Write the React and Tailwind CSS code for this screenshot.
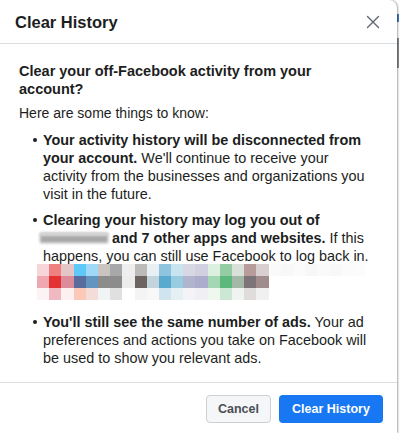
import React from "react";

const row1 = ["bg-[#f7d5d8]","bg-[#ef7f80]","bg-[#e4c5c8]","bg-[#5ec8f8]","bg-[#a0d8f8]","bg-[#cac4c0]","bg-[#a6a8aa]","bg-[#eeeeee]","bg-[#bcbbb9]","bg-[#e8f0f4]","bg-[#8ec4de]","bg-[#c8e4f0]","bg-[#d8d8e4]","bg-[#d0d0e0]","bg-[#dcf0e0]","bg-[#94cca4]","bg-[#d8e0d8]","bg-[#b89c9c]","bg-[#d8d0d0]","bg-[#fafafa]","bg-[#f8f8f8]","bg-[#fbfbfb]","bg-[#f7f7f7]","bg-[#fafafa]","bg-[#f8f8f8]","bg-[#fbfbfb]","bg-[#fcfcfc]"];
const row2 = ["bg-[#f0a8b0]","bg-[#e43234]","bg-[#dc8c98]","bg-[#5a6c9c]","bg-[#6494c0]","bg-[#8c8c8c]","bg-[#8c8c8c]","bg-[#ececec]","bg-[#6c6460]","bg-[#c4d4dc]","bg-[#5aaad0]","bg-[#98cce0]","bg-[#b0b4cc]","bg-[#acaccc]","bg-[#a4d8b4]","bg-[#5cb87c]","bg-[#a4b8a8]","bg-[#7c7478]","bg-[#a08c8c]","bg-[#ffffff]","bg-[#ffffff]","bg-[#ffffff]","bg-[#ffffff]","bg-[#ffffff]","bg-[#ffffff]","bg-[#ffffff]","bg-[#ffffff]"];
const row3 = ["bg-[#fcf4f4]","bg-[#f0b8c0]","bg-[#fcf0f0]","bg-[#fcc8b8]","bg-[#f4dcd8]","bg-[#f0f4f4]","bg-[#e0e0e0]","bg-[#ffffff]","bg-[#f4f4f4]","bg-[#f8f8f8]","bg-[#d0e4f0]","bg-[#e4f0f4]","bg-[#f4f4f8]","bg-[#f0f0f4]","bg-[#eef8ee]","bg-[#cce8d4]","bg-[#f0f4f0]","bg-[#e0dcdc]","bg-[#f0f0f0]","bg-[#ffffff]","bg-[#ffffff]","bg-[#ffffff]","bg-[#ffffff]","bg-[#ffffff]","bg-[#ffffff]","bg-[#ffffff]","bg-[#ffffff]"];

function PixelRow({ cells }) {
  return (
    <div className="flex">
      {cells.map((c, i) => (
        <div key={i} className={`${c} w-[12.2px] h-[12px]`} />
      ))}
    </div>
  );
}

function Bullet({ children }) {
  return (
    <li className="flex">
      <span className="w-[24px] shrink-0 flex justify-end pr-[6px] pt-[7px]">
        <span className="block w-[4px] h-[4px] rounded-full bg-[#1c1e21]" />
      </span>
      <div className="flex-1">{children}</div>
    </li>
  );
}

export default function App() {
  return (
    <div
      className="w-[401px] h-[433px] flex bg-white overflow-hidden text-[#1c1e21]"
      style={{ fontFamily: '"Liberation Sans", Arial, sans-serif' }}
    >
      <div className="w-[397px] h-[433px] flex flex-col bg-white rounded-tr-[8px] shadow-[1px_0_2px_rgba(0,0,0,0.35)] z-10">
        <div className="h-[44px] shrink-0 flex items-center justify-between pl-[15px] pr-[12px] border-b border-[#dadde1]">
          <h1 className="text-[16.5px] font-bold leading-none mt-[1px]">Clear History</h1>
          <button className="w-[24px] h-[24px] flex items-center justify-center text-[#606770]">
            <svg width="14" height="14" viewBox="0 0 14 14" fill="none" stroke="currentColor" strokeWidth="1.4" strokeLinecap="round">
              <path d="M1.5 1.5 L12.5 12.5 M12.5 1.5 L1.5 12.5" />
            </svg>
          </button>
        </div>

        <div className="flex-1 pt-[18px] pl-[19px] pr-[8px] text-[14px] leading-[18px]">
          <h2 className="font-bold text-[14.5px] leading-[18px]">
            <span className="block whitespace-nowrap">Clear your off-Facebook activity from your</span>
            <span className="block whitespace-nowrap">account?</span>
          </h2>
          <p className="mt-[6px] whitespace-nowrap">Here are some things to know:</p>
          <ul className="mt-[9px] flex flex-col gap-[8px] text-[14.4px]">
            <Bullet>
              <span className="block whitespace-nowrap font-bold">Your activity history will be disconnected from</span>
              <span className="block whitespace-nowrap"><b>your account.</b> We'll continue to receive your</span>
              <span className="block whitespace-nowrap">activity from the businesses and organizations you</span>
              <span className="block whitespace-nowrap">visit in the future.</span>
            </Bullet>
            <Bullet>
              <span className="block whitespace-nowrap font-bold">Clearing your history may log you out of</span>
              <span className="flex items-center whitespace-nowrap">
                <span className="inline-block relative w-[68px] h-[10px] mr-[1px] ml-[-3px]">
                  <span className="absolute inset-0 bg-[#a8a8a8] blur-[1.5px]" />
                  <span className="absolute left-0 right-0 top-0 h-[3px] bg-[#d8d8d8] blur-[1px]" />
                </span>
                <span className="ml-[3px]"><b>and 7 other apps and websites.</b> If this</span>
              </span>
              <span className="block whitespace-nowrap">happens, you can still use Facebook to log back in.</span>
              <div className="ml-[-6px] mt-[-1px] mb-[5px]">
                <PixelRow cells={row1} />
                <PixelRow cells={row2} />
                <PixelRow cells={row3} />
              </div>
            </Bullet>
            <Bullet>
              <span className="block whitespace-nowrap"><b>You'll still see the same number of ads.</b> Your ad</span>
              <span className="block whitespace-nowrap">preferences and actions you take on Facebook will</span>
              <span className="block whitespace-nowrap">be used to show you relevant ads.</span>
            </Bullet>
          </ul>
        </div>

        <div className="h-[51px] shrink-0 border-t border-[#dadde1] flex items-start justify-end gap-[8px] pt-[12px] pr-[14px]">
          <button className="h-[28px] w-[65px] rounded-[4px] border border-[#ccd0d5] bg-[#f5f6f7] text-[#4b4f56] text-[12.5px] font-bold">
            Cancel
          </button>
          <button className="h-[28px] w-[104px] rounded-[4px] bg-[#1877f2] text-white text-[12.5px] font-bold">
            Clear History
          </button>
        </div>
      </div>
      <div className="flex-1 bg-white flex flex-col">
        <div className="h-[14px]" />
        <div className="h-[8px] w-[2px] bg-[#4a78c0]" />
        <div className="h-[16px]" />
        <div className="h-[30px] w-[2px] bg-[#8a8d91]" />
      </div>
    </div>
  );
}
